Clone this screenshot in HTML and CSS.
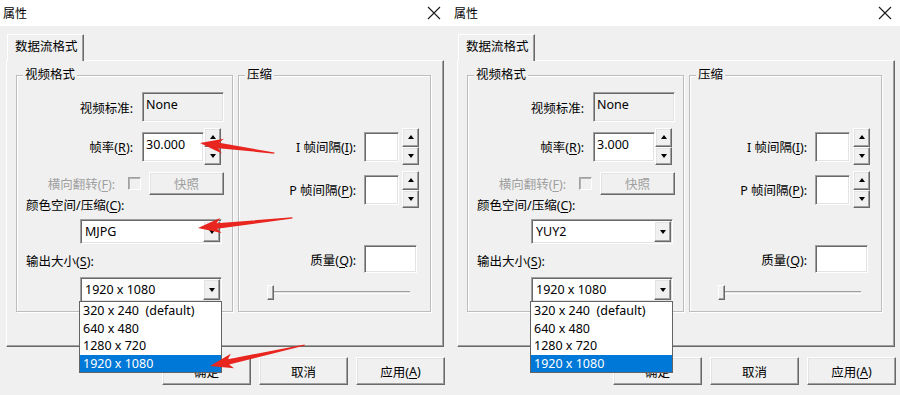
FILE: index.html
```html
<!DOCTYPE html>
<html lang="zh-CN">
<head>
    <meta charset="UTF-8">
    <meta name="viewport" content="width=device-width, initial-scale=1.0">
    <title>属性</title>
    <link rel="stylesheet" href="styles.css">
</head>
<body>
<div class="screen">

    <!-- 左侧对话框 (MJPG) -->
    <div class="dialog">
        <div class="titlebar">
            <span class="title">属性</span>
            <svg class="close" width="14" height="14" viewBox="0 0 14 14"><path d="M1 1L13 13M13 1L1 13" stroke="#1a1a1a" stroke-width="1.1" fill="none"/></svg>
        </div>
        <div class="dialog-body">
            <div class="tabstrip"><div class="tab">数据流格式</div></div>
            <div class="tab-page">
                <fieldset class="group group-video">
                    <legend>视频格式</legend>
                    <div class="row row-std">
                        <span class="lbl">视频标准:</span>
                        <div class="edit edit-std disabled">None</div>
                    </div>
                    <div class="row row-spin">
                        <span class="lbl">帧率(<u>R</u>):</span>
                        <div class="edit edit-rate">30.000</div>
                        <div class="spin">
                            <span class="spin-btn raised"><i class="tri-up"></i></span>
                            <span class="spin-btn raised"><i class="tri-down"></i></span>
                        </div>
                    </div>
                    <div class="row row-flip">
                        <span class="lbl gray">横向翻转(<u>F</u>):</span>
                        <span class="check"></span>
                        <span class="btn btn-snap raised gray">快照</span>
                    </div>
                    <div class="caption">颜色空间/压缩(<u>C</u>):</div>
                    <div class="combo combo-color">
                        <span class="combo-text">MJPG</span>
                        <span class="combo-btn raised"><i class="tri-down"></i></span>
                    </div>
                    <div class="caption caption-size">输出大小(<u>S</u>):</div>
                    <div class="combo combo-size">
                        <span class="combo-text">1920 x 1080</span>
                        <span class="combo-btn raised"><i class="tri-down"></i></span>
                        <ul class="dropdown">
                            <li>320 x 240&nbsp; (default)</li>
                            <li>640 x 480</li>
                            <li>1280 x 720</li>
                            <li class="sel">1920 x 1080</li>
                        </ul>
                    </div>
                </fieldset>
                <fieldset class="group group-comp">
                    <legend>压缩</legend>
                    <div class="row row-spin row-i">
                        <span class="lbl">I 帧间隔(<u>I</u>):</span>
                        <div class="edit edit-small"></div>
                        <div class="spin">
                            <span class="spin-btn raised"><i class="tri-up"></i></span>
                            <span class="spin-btn raised"><i class="tri-down"></i></span>
                        </div>
                    </div>
                    <div class="row row-spin row-p">
                        <span class="lbl">P 帧间隔(<u>P</u>):</span>
                        <div class="edit edit-small"></div>
                        <div class="spin">
                            <span class="spin-btn raised"><i class="tri-up"></i></span>
                            <span class="spin-btn raised"><i class="tri-down"></i></span>
                        </div>
                    </div>
                    <div class="row row-q">
                        <span class="lbl">质量(<u>Q</u>):</span>
                        <div class="edit edit-q"></div>
                    </div>
                    <div class="slider">
                        <div class="slider-track"></div>
                        <span class="slider-thumb"></span>
                    </div>
                </fieldset>
            </div>
            <div class="buttons">
                <span class="btn raised">确定</span>
                <span class="btn raised">取消</span>
                <span class="btn raised">应用(<u>A</u>)</span>
            </div>
        </div>

        <!-- 标注箭头 -->
        <svg class="marks" viewBox="0 0 451 395" width="451" height="395">
            <g fill="#e8251f">
                <polygon transform="translate(200 143) rotate(7.7)" points="0,0 23,-7.5 19,-2.7 75,-0.6 75,0.6 19,2.7 23,7.5"/>
                <polygon transform="translate(198 228) rotate(-6.1)" points="0,0 23,-7.5 19,-2.7 95,-0.6 95,0.6 19,2.7 23,7.5"/>
                <polygon transform="translate(210 366) rotate(-12.5)" points="0,0 23,-7.5 19,-2.7 97,-0.6 97,0.6 19,2.7 23,7.5"/>
            </g>
        </svg>
    </div>

    <!-- 右侧对话框 (YUY2) -->
    <div class="dialog">
        <div class="titlebar">
            <span class="title">属性</span>
            <svg class="close" width="14" height="14" viewBox="0 0 14 14"><path d="M1 1L13 13M13 1L1 13" stroke="#1a1a1a" stroke-width="1.1" fill="none"/></svg>
        </div>
        <div class="dialog-body">
            <div class="tabstrip"><div class="tab">数据流格式</div></div>
            <div class="tab-page">
                <fieldset class="group group-video">
                    <legend>视频格式</legend>
                    <div class="row row-std">
                        <span class="lbl">视频标准:</span>
                        <div class="edit edit-std disabled">None</div>
                    </div>
                    <div class="row row-spin">
                        <span class="lbl">帧率(<u>R</u>):</span>
                        <div class="edit edit-rate">3.000</div>
                        <div class="spin">
                            <span class="spin-btn raised"><i class="tri-up"></i></span>
                            <span class="spin-btn raised"><i class="tri-down"></i></span>
                        </div>
                    </div>
                    <div class="row row-flip">
                        <span class="lbl gray">横向翻转(<u>F</u>):</span>
                        <span class="check"></span>
                        <span class="btn btn-snap raised gray">快照</span>
                    </div>
                    <div class="caption">颜色空间/压缩(<u>C</u>):</div>
                    <div class="combo combo-color">
                        <span class="combo-text">YUY2</span>
                        <span class="combo-btn raised"><i class="tri-down"></i></span>
                    </div>
                    <div class="caption caption-size">输出大小(<u>S</u>):</div>
                    <div class="combo combo-size">
                        <span class="combo-text">1920 x 1080</span>
                        <span class="combo-btn raised"><i class="tri-down"></i></span>
                        <ul class="dropdown">
                            <li>320 x 240&nbsp; (default)</li>
                            <li>640 x 480</li>
                            <li>1280 x 720</li>
                            <li class="sel">1920 x 1080</li>
                        </ul>
                    </div>
                </fieldset>
                <fieldset class="group group-comp">
                    <legend>压缩</legend>
                    <div class="row row-spin row-i">
                        <span class="lbl">I 帧间隔(<u>I</u>):</span>
                        <div class="edit edit-small"></div>
                        <div class="spin">
                            <span class="spin-btn raised"><i class="tri-up"></i></span>
                            <span class="spin-btn raised"><i class="tri-down"></i></span>
                        </div>
                    </div>
                    <div class="row row-spin row-p">
                        <span class="lbl">P 帧间隔(<u>P</u>):</span>
                        <div class="edit edit-small"></div>
                        <div class="spin">
                            <span class="spin-btn raised"><i class="tri-up"></i></span>
                            <span class="spin-btn raised"><i class="tri-down"></i></span>
                        </div>
                    </div>
                    <div class="row row-q">
                        <span class="lbl">质量(<u>Q</u>):</span>
                        <div class="edit edit-q"></div>
                    </div>
                    <div class="slider">
                        <div class="slider-track"></div>
                        <span class="slider-thumb"></span>
                    </div>
                </fieldset>
            </div>
            <div class="buttons">
                <span class="btn raised">确定</span>
                <span class="btn raised">取消</span>
                <span class="btn raised">应用(<u>A</u>)</span>
            </div>
        </div>
    </div>

</div>
</body>
</html>
```

FILE: styles.css
```css
* {
    box-sizing: border-box;
}
body {
    margin: 0;
    font-family: "Noto Sans", "Noto Sans CJK SC", sans-serif;
    font-size: 12.5px;
    color: #000;
    background: #fff;
}
u {
    text-decoration-thickness: 1px;
    text-underline-offset: 2px;
}
.screen {
    display: flex;
    width: 900px;
    height: 395px;
    overflow: hidden;
}
.dialog {
    position: relative;
    flex: none;
    width: 451px;
    height: 395px;
    display: flex;
    flex-direction: column;
}
.titlebar {
    height: 26px;
    background: #fff;
    display: flex;
    align-items: center;
    justify-content: space-between;
    padding: 0 10px 0 3px;
}
.title {
    font-size: 12px;
}
.dialog-body {
    flex: 1;
    background: #f0f0f0;
    padding: 8px 0 0 6px;
}

/* 3D 边框 */
.raised {
    background: #f0f0f0;
    border: 1px solid;
    border-color: #fff #696969 #696969 #fff;
    box-shadow: inset -1px -1px #a0a0a0, inset 1px 1px #e3e3e3;
}
.gray {
    color: #a0a0a0;
}

.tabstrip {
    display: flex;
    padding-left: 1px;
}
.tab {
    position: relative;
    z-index: 1;
    width: 77px;
    height: 27px;
    margin-bottom: -1px;
    padding: 3px 0 0 7px;
    line-height: 18px;
    background: #f0f0f0;
    border-top: 1px solid #fff;
    border-left: 1px solid #fff;
    border-right: 1px solid #696969;
    box-shadow: inset -1px 0 #a0a0a0;
}
.tab-page {
    width: 438px;
    height: 287px;
    border: 1px solid;
    border-color: #fff #696969 #696969 #fff;
    box-shadow: inset -1px -1px #a0a0a0;
    display: flex;
    gap: 5px;
    padding: 6px 0 0 9px;
}

.group {
    margin: 0;
    padding: 0;
    min-width: 0;
    height: 245px;
    border: 1px solid #bdbdbd;
    box-shadow: inset 1px 1px #fff, 1px 1px #fff;
}
.group legend {
    margin-left: 6px;
    padding: 0 2px;
    line-height: 16px;
    background: #f0f0f0;
}
.group-video {
    width: 217px;
}
.group-comp {
    width: 193px;
}

.row {
    display: flex;
    align-items: center;
}
.lbl {
    flex: none;
    text-align: right;
    white-space: nowrap;
}
.group-video .lbl {
    width: 116px;
    margin-right: 9px;
}
.group-comp .lbl {
    width: 117px;
    margin-right: 8px;
}

.edit {
    flex: none;
    height: 30px;
    padding: 3px 0 0 3px;
    line-height: 18px;
    background: #fff;
    border: 1px solid;
    border-color: #a0a0a0 #fff #fff #a0a0a0;
    box-shadow: inset 1px 1px #696969, inset -1px -1px #e3e3e3;
}
.edit.disabled {
    background: #f0f0f0;
}
.edit-std {
    width: 82px;
}
.edit-rate {
    width: 62px;
}
.edit-small {
    width: 35px;
    margin-right: 3px;
}
.edit-q {
    width: 53px;
    height: 28px;
}

.spin {
    flex: none;
    width: 17px;
    display: flex;
    flex-direction: column;
}
.spin-btn {
    height: 18.5px;
    display: flex;
    align-items: center;
    justify-content: center;
}
.tri-up,
.tri-down {
    display: block;
    width: 0;
    height: 0;
    border-left: 3.5px solid transparent;
    border-right: 3.5px solid transparent;
}
.tri-up {
    border-bottom: 4px solid #000;
}
.tri-down {
    border-top: 4px solid #000;
}

.row-std {
    margin-top: 9px;
}
.row-spin {
    height: 37px;
    margin-top: 6px;
}
.row-flip {
    height: 23px;
    margin-top: 7px;
}
.row-flip .lbl {
    width: 98px;
    margin-right: 13px;
}
.check {
    flex: none;
    width: 13px;
    height: 13px;
    border: 1px solid;
    border-color: #a0a0a0 #fff #fff #a0a0a0;
    box-shadow: inset 1px 1px #b4b4b4;
}
.btn {
    display: flex;
    align-items: center;
    justify-content: center;
}
.btn-snap {
    width: 75px;
    height: 23px;
    margin-left: 8px;
}

.caption {
    padding-left: 9px;
    margin-top: 3px;
    line-height: 16px;
}
.caption-size {
    margin-top: 10px;
}
.combo {
    position: relative;
    display: flex;
    width: 142px;
    height: 25px;
    margin-left: 63px;
    margin-top: 5px;
    background: #fff;
    border: 1px solid;
    border-color: #a0a0a0 #fff #fff #a0a0a0;
    box-shadow: inset 1px 1px #696969, inset -1px -1px #e3e3e3;
}
.combo-size {
    margin-top: 7px;
}
.combo-text {
    flex: 1;
    padding: 2px 0 0 4px;
    line-height: 20px;
}
.combo-btn {
    flex: none;
    width: 17px;
    margin: 1px 1px 1px 0;
    display: flex;
    align-items: center;
    justify-content: center;
}
.dropdown {
    position: absolute;
    z-index: 5;
    top: 23px;
    left: -2px;
    width: 143px;
    margin: 0;
    padding: 0;
    list-style: none;
    background: #fff;
    border: 1px solid #646464;
}
.dropdown li {
    height: 17.5px;
    line-height: 17.5px;
    padding-left: 3px;
    white-space: nowrap;
}
.dropdown .sel {
    background: #0078d7;
    color: #fff;
}

.row-i {
    margin-top: 45px;
}
.row-q {
    margin-top: 37px;
}
.slider {
    position: relative;
    width: 143px;
    height: 15px;
    margin: 12px 0 0 28px;
    padding-top: 6px;
}
.slider-track {
    height: 3px;
    border-top: 1px solid #a0a0a0;
    border-bottom: 1px solid #fff;
    background: #e3e3e3;
}
.slider-thumb {
    position: absolute;
    left: 0;
    top: 0;
    width: 7px;
    height: 15px;
    background: #f0f0f0;
    border: 1px solid;
    border-color: #fff #696969 #696969 #fff;
    box-shadow: inset -1px -1px #a0a0a0;
}

.buttons {
    display: flex;
    justify-content: flex-end;
    gap: 8px;
    width: 439px;
    margin-top: 10px;
}
.buttons .btn {
    width: 89px;
    height: 28px;
}

.marks {
    position: absolute;
    left: 0;
    top: 0;
    z-index: 10;
    pointer-events: none;
}
```
